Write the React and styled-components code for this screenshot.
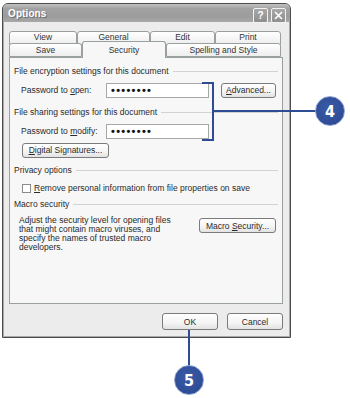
import React from "react";
import styled, { createGlobalStyle } from "styled-components";

const GlobalStyle = createGlobalStyle`
  html, body {
    margin: 0;
    padding: 0;
    background: #ffffff;
  }
  body {
    font-family: "Liberation Sans", Arial, sans-serif;
    color: #2a2a2a;
  }
`;

const Stage = styled.div`
  position: relative;
  width: 350px;
  height: 398px;
  padding: 3px 0 0 2px;
  box-sizing: border-box;
  overflow: hidden;
`;

const Dialog = styled.div`
  width: 289px;
  height: 335px;
  box-sizing: border-box;
  border: 1px solid #4c4c4c;
  border-radius: 6px 6px 0 0;
  overflow: hidden;
  display: flex;
  flex-direction: column;
  background: #ececec;
  box-shadow: inset 0 0 0 1px #a9a9a9;
`;

const TitleBar = styled.div`
  height: 18px;
  flex: none;
  display: flex;
  align-items: center;
  justify-content: space-between;
  padding: 0 4px 0 5px;
  background: linear-gradient(#c2c2c2 0%, #a2a2a2 25%, #9c9c9c 70%, #a8a8a8 100%);
`;

const Title = styled.span`
  font-size: 10px;
  font-weight: 700;
  color: #ffffff;
  text-shadow: 1px 1px 0 #6e6e6e;
  letter-spacing: 0.1px;
  margin-top: 1px;
`;

const TitleButtons = styled.div`
  display: flex;
  gap: 3px;
  margin-top: 4px;
`;

const TitleButton = styled.div`
  width: 13px;
  height: 13px;
  border: 1px solid #f2f2f2;
  border-radius: 2px;
  background: linear-gradient(#a8a8a8, #8e8e8e);
  display: flex;
  align-items: center;
  justify-content: center;
  color: #ffffff;
  font-size: 10px;
  font-weight: 700;
`;

const Body = styled.div`
  flex: 1;
  display: flex;
  flex-direction: column;
  padding: 9px 7px 0 6px;
`;

const TabRow = styled.div`
  display: flex;
  position: relative;
  z-index: ${(p) => (p.$front ? 2 : 1)};
  margin-top: ${(p) => (p.$front ? "-2px" : "0")};
`;

const Tab = styled.div`
  width: ${(p) => p.$w}px;
  box-sizing: border-box;
  height: ${(p) => (p.$active ? "17px" : "14px")};
  margin-top: ${(p) => (p.$active ? "-2px" : "0")};
  margin-bottom: ${(p) => (p.$active ? "-1px" : "0")};
  border: 1px solid #9aa0a0;
  border-bottom: ${(p) => (p.$active ? "none" : "1px solid #9aa0a0")};
  border-radius: 3px 3px 0 0;
  background: ${(p) =>
    p.$active ? "#f7f7f7" : "linear-gradient(#ffffff, #ededed)"};
  font-size: 8.5px;
  display: flex;
  justify-content: center;
  align-items: ${(p) => (p.$active ? "flex-start" : "center")};
  padding-top: ${(p) => (p.$active ? "3px" : "0")};
  padding-bottom: ${(p) => (p.$back ? "2px" : "0")};
  color: #333;
  position: relative;
  z-index: ${(p) => (p.$active ? 3 : 1)};
`;

const Panel = styled.div`
  height: 247px;
  box-sizing: border-box;
  border: 1px solid #9aa0a0;
  background: #f7f7f7;
  padding: 8px 4px 0 4px;
  display: flex;
  flex-direction: column;
  position: relative;
  z-index: 1;
`;

const GroupHeading = styled.div`
  display: flex;
  align-items: center;
  height: 10px;
  font-size: 8.5px;
  margin-top: ${(p) => p.$mt || 0}px;
  white-space: nowrap;

  &::after {
    content: "";
    flex: 1;
    margin-left: 4px;
    border-top: 1px solid #d2d2d2;
  }
`;

const FieldRow = styled.div`
  display: flex;
  align-items: center;
  height: 16px;
  margin-top: ${(p) => p.$mt || 0}px;
  padding-left: 7px;
`;

const Label = styled.span`
  width: 85px;
  font-size: 8.5px;
  white-space: nowrap;
`;

const PasswordBox = styled.div`
  width: 103px;
  height: 15px;
  box-sizing: border-box;
  border: 1px solid #a7a7a7;
  background: #ffffff;
  display: flex;
  align-items: center;
  padding-left: 4px;
  font-size: 11px;
  font-weight: 700;
  letter-spacing: 1.3px;
  color: #111;
  overflow: hidden;
`;

const Button = styled.div`
  width: ${(p) => p.$w}px;
  height: ${(p) => p.$h || 15}px;
  box-sizing: border-box;
  border: 1px solid #7b7b7b;
  border-radius: 3px;
  background: linear-gradient(#ffffff 0%, #f4f4f4 60%, #e2e2e2 100%);
  display: flex;
  align-items: center;
  justify-content: center;
  font-size: 8.5px;
  color: #2a2a2a;
  white-space: nowrap;
  margin-left: ${(p) => p.$ml || 0}px;
  margin-top: ${(p) => p.$mt || 0}px;
  flex: none;
`;

const Key = styled.span`
  text-decoration: underline;
`;

const CheckRow = styled.div`
  display: flex;
  align-items: center;
  gap: 3px;
  margin-top: ${(p) => p.$mt || 0}px;
  padding-left: 8px;
  font-size: 8.5px;
  white-space: nowrap;
`;

const CheckBox = styled.div`
  width: 9px;
  height: 9px;
  box-sizing: border-box;
  border: 1px solid #8a8a8a;
  background: #ffffff;
  flex: none;
`;

const MacroRow = styled.div`
  display: flex;
  align-items: flex-start;
  margin-top: 7px;
  padding-left: 5px;
`;

const Paragraph = styled.p`
  margin: 0;
  width: 175px;
  font-size: 8.5px;
  line-height: 9px;
  white-space: nowrap;
`;

const Footer = styled.div`
  display: flex;
  justify-content: flex-end;
  gap: 9px;
  margin-top: 9px;
`;

const Overlay = styled.svg`
  position: absolute;
  left: 0;
  top: 0;
  z-index: 10;
  pointer-events: none;
`;

const Badge = styled.div`
  position: absolute;
  z-index: 11;
  left: ${(p) => p.$x - 15}px;
  top: ${(p) => p.$y - 15}px;
  width: 30px;
  height: 30px;
  box-sizing: border-box;
  border-radius: 50%;
  border: 1.5px solid #8da0cf;
  background: radial-gradient(circle at 45% 40%, #3a5ba6, #2a4690);
  color: #ffffff;
  font-family: "DejaVu Sans Condensed", "Liberation Sans", sans-serif;
  font-weight: 700;
  font-size: 16px;
  display: flex;
  align-items: center;
  justify-content: center;
`;

const backTabs = [
  { label: "View", w: 68 },
  { label: "General", w: 73 },
  { label: "Edit", w: 65 },
  { label: "Print", w: 66 },
];

const frontTabs = [
  { label: "Save", w: 73 },
  { label: "Security", w: 84, active: true },
  { label: "Spelling and Style", w: 115 },
];

export default function App() {
  return (
    <>
      <GlobalStyle />
      <Stage>
        <Dialog>
          <TitleBar>
            <Title>Options</Title>
            <TitleButtons>
              <TitleButton>?</TitleButton>
              <TitleButton>
                <svg width="9" height="9" viewBox="0 0 9 9">
                  <path d="M1 1 L8 8 M8 1 L1 8" stroke="#fff" strokeWidth="1.6" />
                </svg>
              </TitleButton>
            </TitleButtons>
          </TitleBar>
          <Body>
            <TabRow>
              {backTabs.map((t) => (
                <Tab key={t.label} $w={t.w} $back>
                  {t.label}
                </Tab>
              ))}
            </TabRow>
            <TabRow $front>
              {frontTabs.map((t) => (
                <Tab key={t.label} $w={t.w} $active={t.active}>
                  {t.label}
                </Tab>
              ))}
            </TabRow>
            <Panel>
              <GroupHeading>File encryption settings for this document</GroupHeading>
              <FieldRow $mt={6}>
                <Label>
                  Password to <Key>o</Key>pen:
                </Label>
                <PasswordBox>••••••••</PasswordBox>
                <Button $w={55} $ml={12}>
                  <span>
                    <Key>A</Key>dvanced...
                  </span>
                </Button>
              </FieldRow>
              <GroupHeading $mt={9}>File sharing settings for this document</GroupHeading>
              <FieldRow $mt={6}>
                <Label>
                  Password to <Key>m</Key>odify:
                </Label>
                <PasswordBox>••••••••</PasswordBox>
              </FieldRow>
              <FieldRow $mt={3}>
                <Button $w={87} $h={15} $ml={1}>
                  <span>
                    <Key>D</Key>igital Signatures...
                  </span>
                </Button>
              </FieldRow>
              <GroupHeading $mt={7}>Privacy options</GroupHeading>
              <CheckRow $mt={8}>
                <CheckBox />
                <span>
                  <Key>R</Key>emove personal information from file properties on save
                </span>
              </CheckRow>
              <GroupHeading $mt={6}>Macro security</GroupHeading>
              <MacroRow>
                <Paragraph>
                  Adjust the security level for opening files
                  <br />
                  that might contain macro viruses, and
                  <br />
                  specify the names of trusted macro
                  <br />
                  developers.
                </Paragraph>
                <Button $w={77} $ml={5} $mt={2}>
                  <span>
                    Macro <Key>S</Key>ecurity...
                  </span>
                </Button>
              </MacroRow>
            </Panel>
            <Footer>
              <Button $w={56} $h={17}>OK</Button>
              <Button $w={56} $h={17}>Cancel</Button>
            </Footer>
          </Body>
        </Dialog>
        <Overlay width="350" height="398" viewBox="0 0 350 398">
          <g stroke="#2d4c94" strokeWidth="2" fill="none">
            <path d="M202 83 H213 V140 H202" />
            <path d="M213 111 H316" />
            <path d="M189 330 V366" />
          </g>
        </Overlay>
        <Badge $x={330} $y={111}>4</Badge>
        <Badge $x={189} $y={380}>5</Badge>
      </Stage>
    </>
  );
}
